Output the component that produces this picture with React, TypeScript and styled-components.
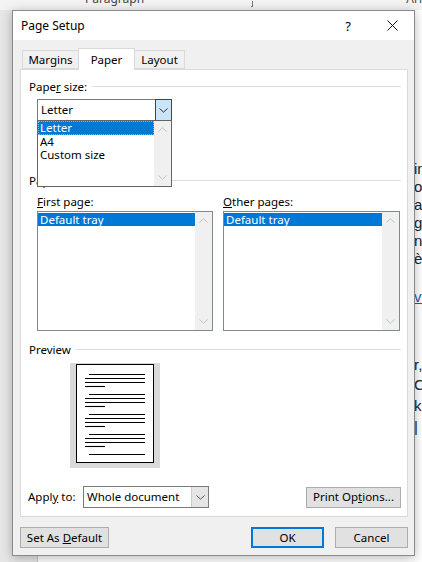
import React from 'react';
import styled, { createGlobalStyle } from 'styled-components';

const FONT = `"Noto Sans", "Open Sans", "Liberation Sans", sans-serif`;

const Global = createGlobalStyle`
  html, body { margin: 0; padding: 0; }
  body {
    width: 422px; height: 562px; overflow: hidden;
    background: #e6e6e6;
    font-family: ${FONT};
    font-size: 11.5px;
    color: #000;
  }
  #root { width: 422px; height: 562px; }
  * { box-sizing: border-box; }
`;

const Screen = styled.div`
  position: relative;
  width: 422px;
  height: 562px;
  overflow: hidden;
  display: flex;
  flex-direction: column;
  background: #e6e6e6;
`;

const Ribbon = styled.div`
  flex: none;
  height: 10px;
  background: #f3f3f3;
  display: flex;
  align-items: flex-start;
  overflow: hidden;
  color: #444;
  font-size: 12px;
`;

const RibbonLabel = styled.span<{ $left: number }>`
  margin-left: ${(p) => p.$left}px;
  margin-top: -9px;
  line-height: 16px;
  white-space: nowrap;
`;

const RibbonIcon = styled.span<{ $left: number }>`
  margin-left: ${(p) => p.$left}px;
  margin-top: 1px;
  width: 7px;
  height: 6px;
  border-right: 1px solid #777;
  border-bottom: 1px solid #777;
`;

const Workspace = styled.div`
  flex: 1;
  display: flex;
`;

const Gutter = styled.div`
  width: 38px;
  background: #e6e6e6;
  border-right: 1px solid #c6c6c6;
`;

const DocPage = styled.div`
  flex: 1;
  background: #ffffff;
  padding: 150px 0 0 376px;
  font-family: "Liberation Sans", sans-serif;
  font-size: 15px;
  line-height: 18px;
  color: #222;
  overflow: hidden;
`;

const DocLine = styled.div<{ $link?: boolean; $gap?: number }>`
  white-space: nowrap;
  margin-top: ${(p) => p.$gap ?? 0}px;
  color: ${(p) => (p.$link ? '#1a5fb4' : '#222')};
  text-decoration: ${(p) => (p.$link ? 'underline' : 'none')};
  height: 18px;
`;

const Dialog = styled.div`
  position: absolute;
  left: 12px;
  top: 10px;
  width: 403px;
  height: 546px;
  border: 1px solid #8a8a8a;
  background: #f0f0f0;
  box-shadow: 0 2px 10px rgba(0, 0, 0, 0.28);
  display: flex;
  flex-direction: column;
`;

const TitleBar = styled.div`
  flex: none;
  height: 29px;
  background: #ffffff;
  display: flex;
  align-items: center;
  padding-left: 8px;
`;

const Title = styled.div`
  flex: 1;
  font-size: 12px;
  line-height: 16px;
`;

const TitleButton = styled.div`
  width: 44px;
  height: 29px;
  display: flex;
  align-items: center;
  justify-content: center;
  font-size: 13px;
`;

const Body = styled.div`
  flex: 1;
  display: flex;
  flex-direction: column;
  padding: 8px 6px 7px 7px;
`;

const TabStrip = styled.div`
  position: relative;
  z-index: 1;
  height: 22px;
  margin: 0 0 -1px 2px;
  display: flex;
  align-items: flex-start;
`;

const Tab = styled.div<{ $active?: boolean; $w: number }>`
  width: ${(p) => p.$w}px;
  margin-left: -1px;
  &:first-child { margin-left: 0; }
  margin-top: ${(p) => (p.$active ? 0 : 2)}px;
  height: ${(p) => (p.$active ? 22 : 19)}px;
  background: ${(p) => (p.$active ? '#ffffff' : '#f0f0f0')};
  border: 1px solid #d9d9d9;
  border-bottom: ${(p) => (p.$active ? 'none' : '1px solid #d9d9d9')};
  position: relative;
  z-index: ${(p) => (p.$active ? 2 : 1)};
  display: flex;
  justify-content: center;
  align-items: center;
  padding-top: 1px;
  padding-bottom: ${(p) => (p.$active ? 1 : 0)}px;
  line-height: 14px;
`;

const Panel = styled.div`
  position: relative;
  flex: 1;
  background: #ffffff;
  border: 1px solid #d9d9d9;
  padding: 10px 6px 8px 8px;
  display: flex;
  flex-direction: column;
`;

const GroupHeader = styled.div<{ $gap?: number }>`
  display: flex;
  align-items: center;
  gap: 5px;
  height: 14px;
  line-height: 14px;
  margin-top: ${(p) => p.$gap ?? 0}px;
`;

const GroupLine = styled.div`
  flex: 1;
  height: 1px;
  background: #dcdcdc;
  margin-top: -1px;
`;

const Key = styled.span`
  text-decoration: underline;
  text-underline-offset: 1px;
`;

const ComboWrap = styled.div<{ $w: number }>`
  position: relative;
  z-index: 3;
  width: ${(p) => p.$w}px;
  margin: 5px 0 0 8px;
`;

const Combo = styled.div<{ $w?: number }>`
  width: ${(p) => (p.$w ? `${p.$w}px` : '100%')};
  height: 22px;
  border: 1px solid #7a7a7a;
  background: #ffffff;
  display: flex;
  align-items: stretch;
`;

const ComboText = styled.div`
  flex: 1;
  padding-left: 3px;
  display: flex;
  align-items: center;
  line-height: 14px;
`;

const ComboArrow = styled.div<{ $hot?: boolean }>`
  width: 17px;
  margin: ${(p) => (p.$hot ? '-1px -1px -1px 0' : '0')};
  background: ${(p) => (p.$hot ? '#cce4f7' : '#e5e5e5')};
  border: ${(p) => (p.$hot ? '1px solid #005499' : 'none')};
  border-left: ${(p) => (p.$hot ? '1px solid #005499' : '1px solid #cccccc')};
  display: flex;
  align-items: center;
  justify-content: center;
`;

const DropList = styled.div`
  position: absolute;
  left: 0;
  top: 21px;
  width: 100%;
  height: 67px;
  border: 1px solid #646464;
  background: #ffffff;
  display: flex;
`;

const Items = styled.div`
  flex: 1;
  display: flex;
  flex-direction: column;
`;

const Item = styled.div<{ $sel?: boolean }>`
  height: 13.5px;
  line-height: 13px;
  padding-left: 2px;
  white-space: nowrap;
  background: ${(p) => (p.$sel ? '#0078d7' : 'transparent')};
  color: ${(p) => (p.$sel ? '#ffffff' : '#000000')};
  outline: ${(p) => (p.$sel ? '1px dotted #7fb8e8' : 'none')};
  outline-offset: -1px;
`;

const ScrollBar = styled.div`
  width: 17px;
  background: #f0f0f0;
  display: flex;
  flex-direction: column;
  justify-content: space-between;
  align-items: center;
  padding: 6px 0 6px;
`;

const SourceRow = styled.div`
  display: grid;
  grid-template-columns: 176px 177px;
  column-gap: 10px;
  margin: 7px 0 0 8px;
`;

const Column = styled.div`
  display: flex;
  flex-direction: column;
`;

const FieldLabel = styled.div`
  height: 14px;
  line-height: 14px;
  margin-bottom: 2px;
`;

const ListBox = styled.div`
  height: 120px;
  border: 1px solid #828790;
  background: #ffffff;
  display: flex;
`;

const ListItems = styled.div`
  flex: 1;
  padding-top: 1px;
`;

const ListRow = styled.div`
  height: 13px;
  line-height: 13px;
  padding-left: 2px;
  background: #0078d7;
  color: #ffffff;
  white-space: nowrap;
`;

const PreviewWrap = styled.div`
  margin: 6px 0 0 41px;
  width: 90px;
  height: 105px;
`;

const ApplyRow = styled.div`
  margin-top: auto;
  display: flex;
  align-items: center;
  height: 22px;
`;

const ApplyLabel = styled.div`
  width: 55px;
  margin-left: -1px;
  line-height: 14px;
`;

const Button = styled.div<{ $w: number; $default?: boolean; $gap?: number }>`
  width: ${(p) => p.$w}px;
  height: 21px;
  margin-left: ${(p) => (p.$gap === undefined ? '0' : `${p.$gap}px`)};
  background: #e1e1e1;
  border: ${(p) => (p.$default ? '2px solid #0078d7' : '1px solid #adadad')};
  display: flex;
  align-items: center;
  justify-content: center;
  line-height: 14px;
  white-space: nowrap;
`;

const PushRight = styled.div`
  margin-left: auto;
`;

const Footer = styled.div`
  flex: none;
  margin-top: 10px;
  display: flex;
  align-items: center;
`;

const Chevron = ({ up, color }: { up?: boolean; color: string }) => (
  <svg width="9" height="5" viewBox="0 0 9 5">
    <polyline
      points={up ? '0.5,4.5 4.5,0.8 8.5,4.5' : '0.5,0.5 4.5,4.2 8.5,0.5'}
      fill="none"
      stroke={color}
      strokeWidth="1"
    />
  </svg>
);

const CloseIcon = () => (
  <svg width="11" height="11" viewBox="0 0 11 11">
    <line x1="0.5" y1="0.5" x2="10.5" y2="10.5" stroke="#111" strokeWidth="1" />
    <line x1="10.5" y1="0.5" x2="0.5" y2="10.5" stroke="#111" strokeWidth="1" />
  </svg>
);

const PreviewPage = () => {
  const groups = [10, 30, 50, 70];
  const lines: React.ReactNode[] = [];
  groups.forEach((g, i) => {
    lines.push(<line key={`a${i}`} x1={19} x2={75} y1={g + 1.5} y2={g + 1.5} />);
    lines.push(<line key={`b${i}`} x1={15} x2={75} y1={g + 5.5} y2={g + 5.5} />);
    lines.push(<line key={`c${i}`} x1={15} x2={75} y1={g + 9.5} y2={g + 9.5} />);
    lines.push(<line key={`d${i}`} x1={15} x2={35} y1={g + 13.5} y2={g + 13.5} />);
  });
  lines.push(<line key="e" x1={19} x2={75} y1={91.5} y2={91.5} />);
  return (
    <svg width="90" height="105" viewBox="0 0 90 105">
      <rect x="0" y="0" width="90" height="105" fill="#d9d9d9" />
      <rect x="6.5" y="1.5" width="77" height="98" fill="#ffffff" stroke="#000" strokeWidth="1" />
      <g stroke="#000" strokeWidth="1.1">{lines}</g>
    </svg>
  );
};

export default function App() {
  return (
    <>
      <Global />
      <Screen>
        <Ribbon>
          <RibbonLabel $left={85}>Paragraph</RibbonLabel>
          <RibbonIcon $left={107} />
          <RibbonLabel $left={153}>Ari</RibbonLabel>
        </Ribbon>
        <Workspace>
          <Gutter />
          <DocPage>
            <DocLine>in</DocLine>
            <DocLine>or</DocLine>
            <DocLine>ay</DocLine>
            <DocLine>g</DocLine>
            <DocLine>n</DocLine>
            <DocLine>èr</DocLine>
            <DocLine $gap={20} $link>vy</DocLine>
            <DocLine $gap={50}>r,</DocLine>
            <DocLine $gap={2}>C</DocLine>
            <DocLine $gap={3}>k</DocLine>
            <DocLine $gap={3}>|</DocLine>
          </DocPage>
        </Workspace>

        <Dialog>
          <TitleBar>
            <Title>Page Setup</Title>
            <TitleButton>?</TitleButton>
            <TitleButton>
              <CloseIcon />
            </TitleButton>
          </TitleBar>
          <Body>
            <TabStrip>
              <Tab $w={57}>Margins</Tab>
              <Tab $w={57} $active>
                Paper
              </Tab>
              <Tab $w={51}>Layout</Tab>
            </TabStrip>
            <Panel>
              <GroupHeader>
                <span>
                  Pape<Key>r</Key> size:
                </span>
                <GroupLine />
              </GroupHeader>
              <ComboWrap $w={135}>
                <Combo>
                  <ComboText>Letter</ComboText>
                  <ComboArrow $hot>
                    <Chevron color="#333" />
                  </ComboArrow>
                </Combo>
                <DropList>
                  <Items>
                    <Item $sel>Letter</Item>
                    <Item>A4</Item>
                    <Item>Custom size</Item>
                  </Items>
                  <ScrollBar>
                    <Chevron up color="#c2c2c2" />
                    <Chevron color="#c2c2c2" />
                  </ScrollBar>
                </DropList>
              </ComboWrap>

              <GroupHeader $gap={53}>
                <span>Paper source</span>
                <GroupLine />
              </GroupHeader>
              <SourceRow>
                <Column>
                  <FieldLabel>
                    <Key>F</Key>irst page:
                  </FieldLabel>
                  <ListBox>
                    <ListItems>
                      <ListRow>Default tray</ListRow>
                    </ListItems>
                    <ScrollBar>
                      <Chevron up color="#c2c2c2" />
                      <Chevron color="#c2c2c2" />
                    </ScrollBar>
                  </ListBox>
                </Column>
                <Column>
                  <FieldLabel>
                    <Key>O</Key>ther pages:
                  </FieldLabel>
                  <ListBox>
                    <ListItems>
                      <ListRow>Default tray</ListRow>
                    </ListItems>
                    <ScrollBar>
                      <Chevron up color="#c2c2c2" />
                      <Chevron color="#c2c2c2" />
                    </ScrollBar>
                  </ListBox>
                </Column>
              </SourceRow>

              <GroupHeader $gap={12}>
                <span>Preview</span>
                <GroupLine />
              </GroupHeader>
              <PreviewWrap>
                <PreviewPage />
              </PreviewWrap>

              <ApplyRow>
                <ApplyLabel>
                  Appl<Key>y</Key> to:
                </ApplyLabel>
                <Combo $w={126}>
                  <ComboText>Whole document</ComboText>
                  <ComboArrow>
                    <Chevron color="#555" />
                  </ComboArrow>
                </Combo>
                <PushRight />
                <Button $w={95} $gap={0}>
                  <span>
                    Print Op<Key>t</Key>ions...
                  </span>
                </Button>
              </ApplyRow>
            </Panel>
            <Footer>
              <Button $w={89}>
                <span>
                  Set As <Key>D</Key>efault
                </span>
              </Button>
              <PushRight />
              <Button $w={73} $default>
                OK
              </Button>
              <Button $w={73} $gap={11}>
                Cancel
              </Button>
            </Footer>
          </Body>
        </Dialog>
      </Screen>
    </>
  );
}
